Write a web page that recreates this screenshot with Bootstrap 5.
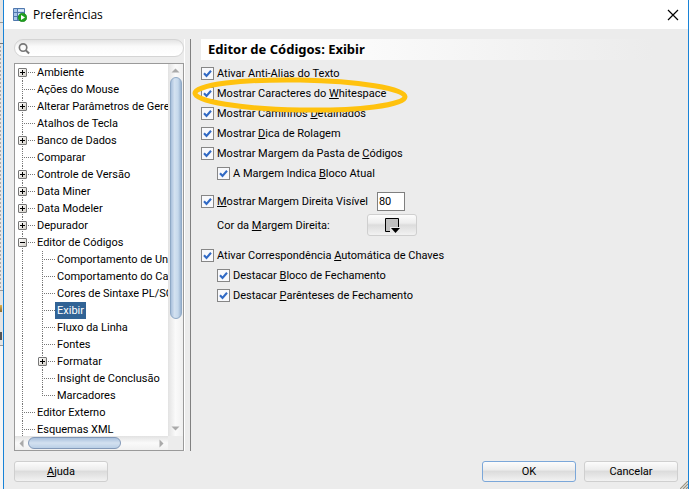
<!DOCTYPE html>
<html lang="pt-BR">
<head>
<meta charset="utf-8">
<meta name="viewport" content="width=device-width, initial-scale=1">
<title>Preferências</title>
<link href="https://cdn.jsdelivr.net/npm/bootstrap@5.3.0/dist/css/bootstrap.min.css" rel="stylesheet">
<style>
body { font-family: Tahoma, Roboto, sans-serif; font-size: 11px; line-height: 17px; color: #000; background: #ececec; }
.behind { width: 3px; background:
  linear-gradient(#999, #999) 0 22px / 3px 1px no-repeat,
  linear-gradient(#777, #777) 0 43px / 3px 1px no-repeat,
  repeating-linear-gradient(#aaa 0 2px, #e8e8e8 2px 4px) 0 46px / 1px 244px no-repeat,
  linear-gradient(#999, #999) 0 290px / 3px 1px no-repeat,
  linear-gradient(#e3b34a, #8a6a30) 0 305px / 2px 7px no-repeat,
  linear-gradient(#555, #555) 0 332px / 2px 8px no-repeat,
  linear-gradient(#999, #999) 0 345px / 3px 1px no-repeat,
  linear-gradient(#e4e4e4 0 345px, #f5f5f5 345px); }
.dialog { border: solid #1883d7; border-width: 0 1px; }
.titlebar { height: 29px; font-family: "Segoe UI", "Open Sans", sans-serif; font-size: 12px; padding: 0 9px; gap: 6px; }
.content { padding: 10px 10px 7px 10px; min-height: 0; }
.columns { min-height: 0; }
.side { width: 170px; gap: 6px; }
.search { height: 18px; border: 1px solid #d4d4d4; border-radius: 9px; background: linear-gradient(#e4e4e4, #fafafa 40%, #fff); padding: 0 3px; }
.search input { font-size: 11px; outline: 0; }
.tree { border: 1px solid #9a9a9a; display: grid; grid-template-columns: minmax(0, 1fr) 15px; grid-template-rows: minmax(0, 1fr) 14px; background: #fff; min-height: 0; }
.rows { overflow: hidden; min-height: 0; white-space: nowrap; }
.node { height: 17px; display: flex; }
.rail, .joint { flex: 0 0 20px; height: 17px; --v: repeating-linear-gradient(#777 0 1px, transparent 1px 2px); --h: repeating-linear-gradient(90deg, #777 0 1px, transparent 1px 2px); }
.rail { background: var(--v) 7px 0 / 1px 17px no-repeat; }
.joint { background: var(--v) 7px 0 / 1px 17px no-repeat, var(--h) 7px 8px / 13px 1px no-repeat; padding: 4px 0 0 3px; line-height: 0; }
.joint.first { background: var(--h) 7px 8px / 13px 1px no-repeat, var(--v) 7px 8px / 1px 9px no-repeat; }
.joint.end { background: var(--v) 7px 0 / 1px 9px no-repeat, var(--h) 7px 8px / 13px 1px no-repeat; }
.toggle { width: 9px; height: 9px; border: 1px solid #777; border-radius: 1px; padding: 0; display: block;
  background: linear-gradient(#000, #000) 1px 3px / 5px 1px no-repeat, linear-gradient(#000, #000) 3px 1px / 1px 5px no-repeat, linear-gradient(135deg, #fff, #d4d0c8); }
.toggle.open { background: linear-gradient(#000, #000) 1px 3px / 5px 1px no-repeat, linear-gradient(135deg, #fff, #d4d0c8); }
.node a { color: #000; text-decoration: none; padding: 0 2px; }
.node a.active { background: #316395; color: #fff; }
.vbar { background: linear-gradient(90deg, #e2e2e2, #fafafa 50%, #f0f0f0); display: flex; flex-direction: column; align-items: center; }
.hbar { background: linear-gradient(#e2e2e2, #fafafa 50%, #f0f0f0); display: flex; align-items: center; }
.corner { background: #ececec; }
.vthumb { width: 12px; height: 65%; border: 1px solid #8fa9c6; border-radius: 6px; background: linear-gradient(90deg, #a9c0dc, #d3e1f0 35%, #c6d9ec 70%, #9ab3d0); }
.hthumb { height: 12px; width: 61%; border: 1px solid #8399b8; border-radius: 6px; background: linear-gradient(#a9c0dc, #d3e1f0 50%, #bacfe6); }
.splitter { width: 7px; border-left: 1px solid #fff; border-right: 1px solid #808080; }
.pane { padding-left: 10px; padding-right: 26px; }
.heading { height: 21px; line-height: 20px; font-family: Tahoma, "Noto Sans", sans-serif; font-size: 13px; font-weight: 700; padding-left: 7px; margin: 0 0 3px; background: linear-gradient(90deg, #fff, #fff 15%, #ececec); }
.opt { height: 20px; display: flex; align-items: center; gap: 3px; padding: 0; margin: 0; min-height: 0; }
.opt .form-check-input { width: 13px; height: 13px; margin: 0; float: none; border: 1px solid #868686; border-radius: 0; background-color: #f8f9fc; flex: none; }
.opt .form-check-input:checked { background-color: #f8f9fc; background-size: 11px 11px; background-image: url("data:image/svg+xml,%3Csvg xmlns='http://www.w3.org/2000/svg' viewBox='0 0 11 11'%3E%3Cpath d='M2 5.2 4.5 8 9 2.8' fill='none' stroke='%23316ac5' stroke-width='2.1'/%3E%3C/svg%3E"); }
.sub { margin-left: 16px; }
.gap-top { margin-top: 8px; }
.group-top { margin-top: 10px; }
.caption { width: 147px; }
.num { width: 28px; height: 19px; border: 1px solid #7f7f7f; padding: 0 1px; margin-left: 6px; font-size: 11px; }
.push { border: 1px solid #cfcfcf; border-radius: 3px; height: 21px; width: 94px; padding: 0; font-size: 11px; line-height: 17px; color: #000; background: linear-gradient(#fcfcfc, #ededed 40%, #dcdcdc 50%, #f2f2f2); }
.push.default { border-color: #7ba7d9; }
.swatch { width: 50px; height: 22px; display: flex; align-items: center; justify-content: center; }
.ring { position: absolute; left: -9px; top: 36px; pointer-events: none; }
.grip { position: absolute; right: 0; bottom: 0; }
.actions { padding-top: 10px; }
u { text-underline-offset: 1px; }
</style>
<script src="https://cdn.jsdelivr.net/npm/bootstrap@5.3.0/dist/js/bootstrap.bundle.min.js"></script>
</head>
<body>
<div class="d-flex vh-100 overflow-hidden">
  <div class="behind flex-shrink-0"></div>
  <main class="dialog d-flex flex-column flex-grow-1 position-relative">
    <header class="titlebar bg-white d-flex align-items-center flex-shrink-0">
      <svg width="14" height="14" viewBox="0 0 14 14" aria-hidden="true"><path d="M.5.5h11v12H.5z" fill="#a9c6ea" stroke="#5078ae"/><path d="M1 4.5h10M1 8.5h10M4.5 1v11" stroke="#5078ae"/><path d="M5 2.500h6M5 6.500h6" stroke="#dceafa" stroke-width="2"/><circle cx="9.500" cy="9.500" r="4.300" fill="#1fa01f" stroke="#08790c" stroke-width=".6"/><path d="m8 7 4 2.500-4 2.500z" fill="#fff"/></svg>
      <span class="flex-grow-1">Preferências</span>
      <button type="button" class="border-0 bg-transparent p-0 d-flex" aria-label="Fechar"><svg width="12" height="12" viewBox="0 0 12 12"><path d="m1 1 10 10M11 1 1 11" stroke="#000" stroke-width="1.200"/></svg></button>
    </header>
    <div class="content d-flex flex-column flex-grow-1">
      <div class="columns d-flex flex-grow-1">
        <aside class="side d-flex flex-column flex-shrink-0">
          <div class="search d-flex align-items-center flex-shrink-0">
            <svg width="13" height="13" viewBox="0 0 13 13" aria-hidden="true"><circle cx="5.500" cy="5.500" r="4" fill="none" stroke="#777" stroke-width="1.800"/><path d="m8.500 8.500 3.500 3.500" stroke="#777" stroke-width="2.200"/></svg>
            <input type="search" class="border-0 bg-transparent p-0 w-100" aria-label="Pesquisar">
          </div>
          <div class="tree flex-grow-1">
            <nav class="rows" aria-label="Categorias">
              <div class="node"><span class="joint first"><button class="toggle" aria-label="Expandir"></button></span><a href="#">Ambiente</a></div>
              <div class="node"><span class="joint"></span><a href="#">Ações do Mouse</a></div>
              <div class="node"><span class="joint"><button class="toggle" aria-label="Expandir"></button></span><a href="#">Alterar Parâmetros de Gere</a></div>
              <div class="node"><span class="joint"></span><a href="#">Atalhos de Tecla</a></div>
              <div class="node"><span class="joint"><button class="toggle" aria-label="Expandir"></button></span><a href="#">Banco de Dados</a></div>
              <div class="node"><span class="joint"></span><a href="#">Comparar</a></div>
              <div class="node"><span class="joint"><button class="toggle" aria-label="Expandir"></button></span><a href="#">Controle de Versão</a></div>
              <div class="node"><span class="joint"><button class="toggle" aria-label="Expandir"></button></span><a href="#">Data Miner</a></div>
              <div class="node"><span class="joint"><button class="toggle" aria-label="Expandir"></button></span><a href="#">Data Modeler</a></div>
              <div class="node"><span class="joint"><button class="toggle" aria-label="Expandir"></button></span><a href="#">Depurador</a></div>
              <div class="node"><span class="joint"><button class="toggle open" aria-label="Recolher"></button></span><a href="#">Editor de Códigos</a></div>
              <div class="node"><span class="rail"></span><span class="joint"></span><a href="#">Comportamento de Und</a></div>
              <div class="node"><span class="rail"></span><span class="joint"></span><a href="#">Comportamento do Car</a></div>
              <div class="node"><span class="rail"></span><span class="joint"></span><a href="#">Cores de Sintaxe PL/SQ</a></div>
              <div class="node"><span class="rail"></span><span class="joint"></span><a href="#" class="active">Exibir</a></div>
              <div class="node"><span class="rail"></span><span class="joint"></span><a href="#">Fluxo da Linha</a></div>
              <div class="node"><span class="rail"></span><span class="joint"></span><a href="#">Fontes</a></div>
              <div class="node"><span class="rail"></span><span class="joint"><button class="toggle" aria-label="Expandir"></button></span><a href="#">Formatar</a></div>
              <div class="node"><span class="rail"></span><span class="joint"></span><a href="#">Insight de Conclusão</a></div>
              <div class="node"><span class="rail"></span><span class="joint end"></span><a href="#">Marcadores</a></div>
              <div class="node"><span class="joint"></span><a href="#">Editor Externo</a></div>
              <div class="node"><span class="joint"></span><a href="#">Esquemas XML</a></div>
            </nav>
            <div class="vbar">
              <svg class="flex-shrink-0" width="13" height="13" viewBox="0 0 13 13"><path d="m2.500 8.500 4-4 4 4z" fill="#aaa"/></svg>
              <div class="vthumb"></div>
              <svg class="flex-shrink-0 mt-auto" width="13" height="15" viewBox="0 0 13 15"><path d="m2.500 5.500 4 4 4-4z" fill="#aaa"/></svg>
            </div>
            <div class="hbar">
              <svg class="flex-shrink-0" width="13" height="13" viewBox="0 0 13 13"><path d="m8.500 2.500-4 4 4 4z" fill="#aaa"/></svg>
              <div class="hthumb"></div>
              <svg class="flex-shrink-0 ms-auto" width="13" height="13" viewBox="0 0 13 13"><path d="m4.500 2.500 4 4-4 4z" fill="#aaa"/></svg>
            </div>
            <div class="corner"></div>
          </div>
        </aside>
        <div class="splitter flex-shrink-0"></div>
        <section class="pane flex-grow-1">
          <div class="position-relative">
            <h1 class="heading">Editor de Códigos: Exibir</h1>
            <div class="opt form-check"><input class="form-check-input" type="checkbox" id="c1" checked><label for="c1">Ativar Anti-Alias do Texto</label></div>
            <div class="opt form-check"><input class="form-check-input" type="checkbox" id="c2" checked><label for="c2">Mostrar Caracteres do <u>W</u>hitespace</label></div>
            <div class="opt form-check"><input class="form-check-input" type="checkbox" id="c3" checked><label for="c3">Mostrar Caminhos <u>D</u>etalhados</label></div>
            <div class="opt form-check"><input class="form-check-input" type="checkbox" id="c4" checked><label for="c4">Mostrar <u>D</u>ica de Rolagem</label></div>
            <div class="opt form-check"><input class="form-check-input" type="checkbox" id="c5" checked><label for="c5">Mostrar Margem da Pasta de <u>C</u>ódigos</label></div>
            <div class="opt form-check sub"><input class="form-check-input" type="checkbox" id="c6" checked><label for="c6">A Margem Indica <u>B</u>loco Atual</label></div>
            <div class="opt form-check gap-top"><input class="form-check-input" type="checkbox" id="c7" checked><label for="c7"><u>M</u>ostrar Margem Direita Visível</label><input type="text" class="num" value="80" aria-label="Coluna da margem"></div>
            <div class="opt sub my-1"><label for="cor" class="caption">Cor da <u>M</u>argem Direita:</label>
              <button type="button" id="cor" class="push swatch"><svg width="17" height="16" viewBox="0 0 17 16"><path d="M1.500 1.500h13v13h-13z" fill="#c0c0c0" stroke="#000"/><path d="M6 10h10v6H6z" fill="#e8e8e8"/><path d="M7 11h9l-4.500 5z" fill="#000"/></svg></button></div>
            <div class="opt form-check group-top"><input class="form-check-input" type="checkbox" id="c8" checked><label for="c8">Ativar Correspondência <u>A</u>utomática de Chaves</label></div>
            <div class="opt form-check sub"><input class="form-check-input" type="checkbox" id="c9" checked><label for="c9">Destacar <u>B</u>loco de Fechamento</label></div>
            <div class="opt form-check sub"><input class="form-check-input" type="checkbox" id="c10" checked><label for="c10">Destacar <u>P</u>arênteses de Fechamento</label></div>
            <svg class="ring" width="218" height="42" viewBox="0 0 218 42" aria-hidden="true"><ellipse cx="108" cy="20" rx="105" ry="15" fill="none" stroke="#ffc20e" stroke-width="5" transform="rotate(1 108 20)"/></svg>
          </div>
        </section>
      </div>
      <footer class="actions d-flex gap-2">
        <button type="button" class="push me-auto"><u>A</u>juda</button>
        <button type="button" class="push default">OK</button>
        <button type="button" class="push">Cancelar</button>
      </footer>
    </div>
    <svg class="grip" width="8" height="8" viewBox="0 0 8 8" aria-hidden="true"><path d="m0 8 8-8M3 8l5-5M6 8l2-2" stroke="#999482" stroke-width="1.200"/></svg>
  </main>
</div>
</body>
</html>
